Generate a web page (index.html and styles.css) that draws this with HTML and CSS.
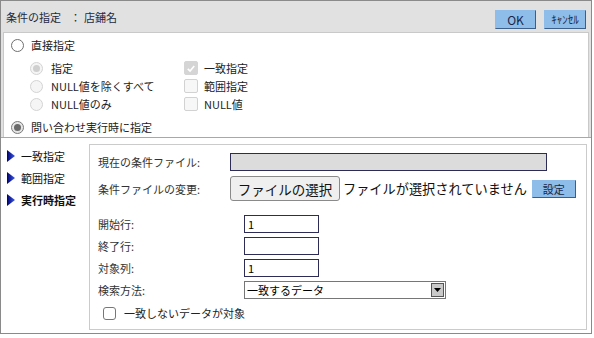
FILE: index.html
```html
<!DOCTYPE html>
<html lang="ja">
<head>
<meta charset="utf-8">
<link rel="stylesheet" href="styles.css">
</head>
<body>
<div class="dlg">
  <div class="hdr">
    <div class="title">条件の指定<span class="sep">：</span>店鋪名</div>
    <div class="hbtns">
      <button class="btn ok">OK</button>
      <button class="btn cancel">ｷｬﾝｾﾙ</button>
    </div>
  </div>
  <div class="panel1">
    <div class="row main"><span class="radio"></span><span class="lbl">直接指定</span></div>
    <div class="sub">
      <div class="col">
        <div class="row"><span class="radio dis checked"></span><span class="lbl2">指定</span></div>
        <div class="row"><span class="radio dis"></span><span class="lbl2">NULL値を除くすべて</span></div>
        <div class="row"><span class="radio dis"></span><span class="lbl2">NULL値のみ</span></div>
      </div>
      <div class="col">
        <div class="row"><span class="cb dis checked"><svg viewBox="0 0 13 13" width="13" height="13"><path d="M3 6.8 L5.5 9.2 L10 3.8" fill="none" stroke="#fff" stroke-width="1.8"/></svg></span><span class="lbl3">一致指定</span></div>
        <div class="row"><span class="cb dis"></span><span class="lbl3">範囲指定</span></div>
        <div class="row"><span class="cb dis"></span><span class="lbl3">NULL値</span></div>
      </div>
    </div>
    <div class="row main"><span class="radio on"></span><span class="lbl">問い合わせ実行時に指定</span></div>
  </div>
  <div class="lower">
    <div class="nav">
      <div class="navitem"><svg class="tri" viewBox="0 0 8 12" width="8" height="12"><defs><linearGradient id="g1" x1="0" y1="0" x2="1" y2="0"><stop offset="0" stop-color="#00006e"/><stop offset="1" stop-color="#3b5cf0"/></linearGradient></defs><polygon points="0,0 8,6 0,12" fill="url(#g1)"/></svg><span>一致指定</span></div>
      <div class="navitem"><svg class="tri" viewBox="0 0 8 12" width="8" height="12"><polygon points="0,0 8,6 0,12" fill="url(#g1)"/></svg><span>範囲指定</span></div>
      <div class="navitem active"><svg class="tri" viewBox="0 0 8 12" width="8" height="12"><polygon points="0,0 8,6 0,12" fill="url(#g1)"/></svg><span>実行時指定</span></div>
    </div>
    <div class="box">
      <div class="frow r1"><span class="flabel">現在の条件ファイル:</span><span class="curfile"></span></div>
      <div class="frow r2"><span class="flabel">条件ファイルの変更:</span><span class="filebtn">ファイルの選択</span><span class="nofile">ファイルが選択されていません</span><button class="btn set">設定</button></div>
      <div class="frow r3"><span class="flabel w2">開始行:</span><span class="inp">1</span></div>
      <div class="frow r4"><span class="flabel w2">終了行:</span><span class="inp"></span></div>
      <div class="frow r4"><span class="flabel w2">対象列:</span><span class="inp">1</span></div>
      <div class="frow r4"><span class="flabel w2">検索方法:</span><span class="sel"><span class="seltext">一致するデータ</span><span class="selarrow"><svg viewBox="0 0 7 4" width="7" height="4"><polygon points="0,0 7,0 3.5,4" fill="#000"/></svg></span></span></div>
      <div class="frow r7"><span class="cb plain"></span><span class="cblabel">一致しないデータが対象</span></div>
    </div>
  </div>
</div>
</body>
</html>
```

FILE: styles.css
```css
* { box-sizing: border-box; }
html, body { margin: 0; padding: 0; background: #fff; }
body {
  font-family: "Noto Sans CJK JP", "Noto Sans", sans-serif;
  font-size: 11px;
  color: #222;
}
.dlg {
  width: 592px;
  height: 334px;
  border: 1px solid #8a8a8a;
  background: #e1e1e1;
  display: flex;
  flex-direction: column;
}
.hdr {
  height: 31px;
  display: flex;
  align-items: center;
  justify-content: space-between;
  padding: 0 5px 0 5px;
}
.title { color: #1e2a40; font-size: 11px; }
.sep { margin: 0 3px 0 9px; }
.hbtns { display: flex; gap: 8px; margin-top: 5px; }
.btn {
  font-family: "Noto Sans CJK JP", "Noto Sans", sans-serif;
  background: #8dbde8;
  border: 1px solid #8dbde8;
  border-right-color: #3c5f8a;
  border-bottom-color: #3c5f8a;
  color: #16284a;
  padding: 0;
  height: 19px;
  display: flex;
  align-items: center;
  justify-content: center;
}
.ok { width: 41px; font-size: 12px; }
.cancel { width: 42px; font-size: 11px; }
.panel1 {
  margin: 0 2px 0 2px;
  background: #fff;
  border: 1px solid #c9c9c9;
  border-bottom: none;
  padding: 3px 0 0 7px;
  height: 105px;
}
.row { display: flex; align-items: center; height: 18px; }
.main .lbl { margin-left: 7px; }
.sub { display: flex; margin: 5px 0 5px 19px; }
.col:first-child { width: 154px; }
.lbl2 { margin-left: 8px; }
.lbl3 { margin-left: 6px; }
.radio {
  width: 13px; height: 13px;
  border-radius: 50%;
  border: 1px solid #6f6f6f;
  background: #fff;
  display: flex; align-items: center; justify-content: center;
  flex: none;
}
.radio.dis { border-color: #d4d4d4; background: #f5f5f5; }
.radio.dis.checked::after {
  content: ""; width: 7px; height: 7px; border-radius: 50%; background: #cfcfcf;
}
.radio.on { border-color: #7a7a7a; background: #e6e6e6; }
.radio.on::after {
  content: ""; width: 7px; height: 7px; border-radius: 50%; background: #6a6a6a;
}
.cb {
  width: 14px; height: 14px;
  border-radius: 2px;
  border: 1px solid #d2d2d2;
  background: #f7f7f7;
  flex: none;
  display: flex; align-items: center; justify-content: center;
}
.cb.checked { background: #d5d5d5; border-color: #d5d5d5; }
.cb svg { display: block; }
.lower {
  flex: 1;
  background: #fff;
  border-top: 1px solid #a8a8a8;
  display: flex;
}
.nav { width: 88px; padding-top: 7px; }
.navitem {
  display: flex; align-items: center; height: 22px;
  padding-left: 6px;
  color: #111;
  font-weight: 400;
}
.navitem.active { font-weight: 700; }
.tri { margin-right: 6px; flex: none; }
.box {
  flex: 1;
  margin: 6px 4px 3px 0;
  border: 1px solid #cbcbcb;
  padding: 8px 0 0 8px;
}
.frow { display: flex; align-items: center; }
.flabel { width: 132px; color: #333; flex: none; }
.flabel.w2 { width: 146px; }
.r1 { height: 18px; }
.curfile {
  width: 317px; height: 18px;
  background: #dcdcdc;
  border: 1px solid #2c2c56;
}
.r2 { height: 25px; margin-top: 5px; }
.filebtn {
  width: 110px; height: 25px;
  border: 1px solid #8a8a8a;
  border-radius: 3px;
  background: #efefef;
  font-size: 13.5px;
  display: flex; align-items: center; justify-content: center;
  color: #111;
}
.nofile { font-size: 13.2px; margin-left: 3px; color: #111; }
.set { width: 44px; height: 18px; margin-left: 5px; font-size: 11px; }
.r3 { margin-top: 14px; height: 18px; }
.r4 { margin-top: 4px; height: 18px; }
.inp {
  width: 75px; height: 18px;
  border: 1px solid #2c2c56;
  padding-left: 3px;
  font-size: 11px;
  display: flex; align-items: center;
  color: #000;
}
.sel {
  width: 202px; height: 18px;
  border: 1px solid #767676;
  display: flex; align-items: center; justify-content: space-between;
  padding: 0 1px 0 2px;
}
.seltext { color: #000; }
.selarrow {
  width: 13px; height: 14px;
  background: #c9c9c9;
  border: 1px solid #555;
  display: flex; align-items: center; justify-content: center;
}
.selarrow svg { display: block; }
.r7 { margin-top: 7px; height: 14px; padding-left: 5px; }
.cb.plain { border-color: #777; background: #fff; width: 13px; height: 13px; border-radius: 3px; }
.cblabel { margin-left: 8px; color: #222; }
```
